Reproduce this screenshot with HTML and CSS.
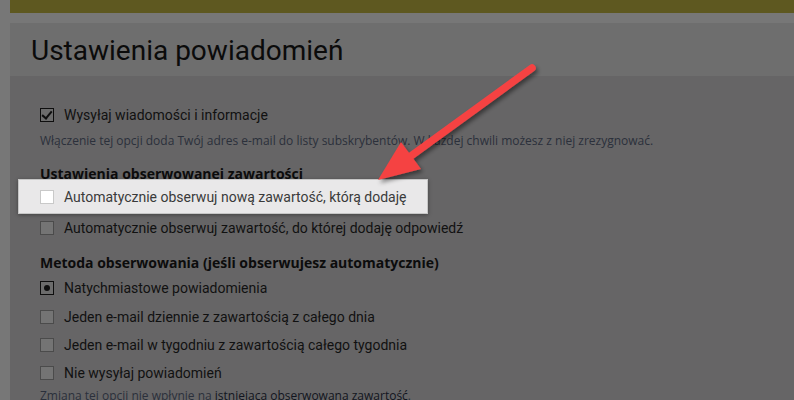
FILE: index.html
```html
<!DOCTYPE html>
<html lang="pl">
<head>
    <meta charset="UTF-8">
    <meta name="viewport" content="width=device-width, initial-scale=1.0">
    <title>Ustawienia powiadomień</title>
    <link rel="stylesheet" href="styles.css">
</head>
<body>

    <div class="topbar"></div>
    <div class="page">
        <div class="page-header">
            <h1>Ustawienia powiadomień</h1>
        </div>
        <div class="page-content">
            <label class="option">
                <span class="box checked"></span>
                Wysyłaj wiadomości i informacje
            </label>
            <p class="hint">Włączenie tej opcji doda Twój adres e-mail do listy subskrybentów. W każdej chwili możesz z niej zrezygnować.</p>

            <h3 class="group-title">Ustawienia obserwowanej zawartości</h3>
            <div class="spotlight">
                <label class="option">
                    <span class="box"></span>
                    Automatycznie obserwuj nową zawartość, którą dodaję
                </label>
            </div>
            <label class="option">
                <span class="box"></span>
                Automatycznie obserwuj zawartość, do której dodaję odpowiedź
            </label>

            <h3 class="group-title second">Metoda obserwowania (jeśli obserwujesz automatycznie)</h3>
            <div class="method-list">
                <label class="option">
                    <span class="box radio"></span>
                    Natychmiastowe powiadomienia
                </label>
                <label class="option">
                    <span class="box"></span>
                    Jeden e-mail dziennie z zawartością z całego dnia
                </label>
                <label class="option">
                    <span class="box"></span>
                    Jeden e-mail w tygodniu z zawartością całego tygodnia
                </label>
                <label class="option">
                    <span class="box"></span>
                    Nie wysyłaj powiadomień
                </label>
            </div>
            <p class="hint last">Zmiana tej opcji nie wpłynie na <a href="#">istniejącą obserwowaną zawartość</a>.</p>
        </div>
    </div>

    <!-- annotation arrow -->
    <svg class="arrow" width="794" height="400" viewBox="0 0 794 400">
        <defs>
            <filter id="shadow" x="-20%" y="-20%" width="140%" height="140%">
                <feDropShadow dx="2" dy="3" stdDeviation="2" flood-color="#000" flood-opacity="0.45"/>
            </filter>
        </defs>
        <g filter="url(#shadow)">
            <line x1="532" y1="68" x2="404" y2="161" stroke="#f54343" stroke-width="7.5" stroke-linecap="round"/>
            <polygon points="378,180 401,142 421,169" fill="#f54343"/>
        </g>
    </svg>

</body>
</html>
```

FILE: styles.css
```css
body {
    margin: 0;
    width: 794px;
    height: 400px;
    overflow: hidden;
    background-color: #777777;
    font-family: Roboto, "Liberation Sans", sans-serif;
    position: relative;
}
.topbar {
    margin-left: 10px;
    height: 13px;
    background-color: #5e5820;
}
.page {
    margin: 10px 0 0 10px;
    background-color: #666566;
    height: 377px;
}
.page-header {
    height: 53px;
    background-color: #6e6e6e;
    padding-left: 21px;
    box-sizing: border-box;
}
h1 {
    margin: 0;
    font-weight: 400;
    font-size: 28px;
    line-height: 55px;
    color: #0b0b0b;
}
.page-content {
    padding: 25px 0 0 30px;
}
.option {
    display: flex;
    align-items: center;
    gap: 10px;
    height: 28px;
    font-size: 14px;
    color: #111;
}
.method-list .option {
    height: 28.4px;
}
.box {
    width: 12px;
    height: 12px;
    border: 1px solid #4b4b4b;
    background-color: #747474;
    position: relative;
    flex: none;
}
.box.checked,
.box.radio {
    border-color: #0e0e0e;
    background-color: #6c6c6c;
}
.box.checked::after {
    content: "";
    position: absolute;
    left: 3px;
    top: 0px;
    width: 4px;
    height: 8px;
    border: solid #0e0e0e;
    border-width: 0 2px 2px 0;
    transform: rotate(40deg);
}
.box.radio::after {
    content: "";
    position: absolute;
    left: 3px;
    top: 3px;
    width: 6px;
    height: 6px;
    border-radius: 50%;
    background-color: #0e0e0e;
}
.hint {
    margin: 3px 0 0;
    font-family: "Open Sans", sans-serif;
    font-size: 12px;
    line-height: 18px;
    color: #2b303b;
}
.hint.last {
    margin-top: 0;
    line-height: 16px;
}
.hint a {
    color: #121520;
    text-decoration: none;
}
.group-title {
    margin: 14px 0 0;
    font-family: "Open Sans", sans-serif;
    font-weight: 700;
    font-size: 14px;
    line-height: 19px;
    color: #0c0c0c;
}
.group-title.second {
    margin: 11px 0 1px;
    line-height: 20px;
}
.spotlight {
    display: inline-flex;
    margin: -4px 0 0 -22px;
    padding: 3px 20px 2px 21px;
    background-color: #e9e8e9;
    border: 1px solid #c6c6c6;
    box-shadow: 0 1px 4px rgba(0, 0, 0, 0.35);
}
.spotlight .option {
    color: #3a3a3a;
}
.spotlight .box {
    background-color: #fff;
    border-color: #c9c9c9;
}
.arrow {
    position: absolute;
    left: 0;
    top: 0;
    pointer-events: none;
}
```
